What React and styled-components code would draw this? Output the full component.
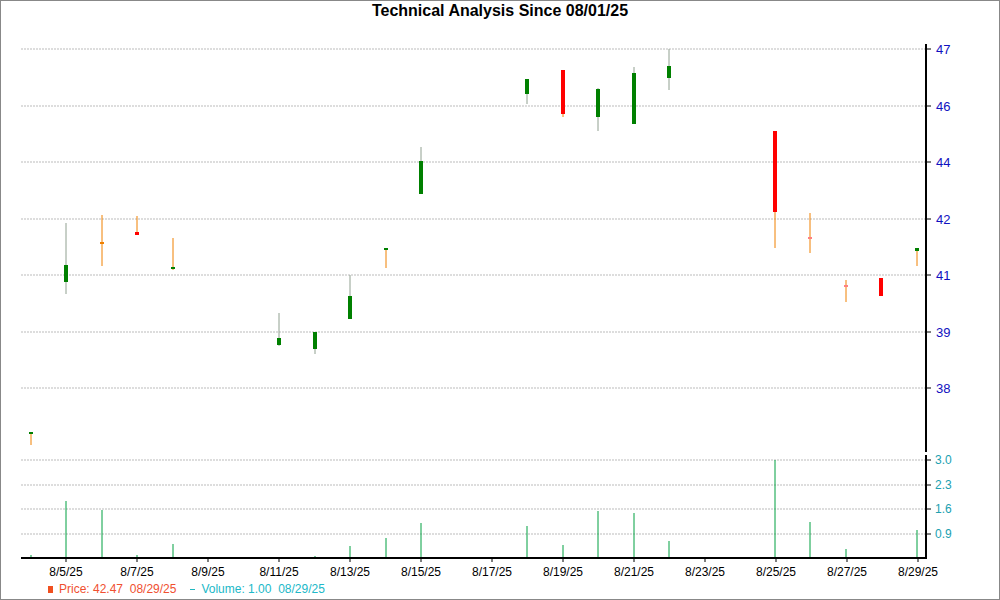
import React from 'react';
import styled, { createGlobalStyle } from 'styled-components';

const Global = createGlobalStyle`
  body { margin: 0; font-family: "Liberation Sans", Arial, sans-serif; background: #fff; }
`;

const Frame = styled.div`
  width: 1000px;
  height: 600px;
  box-sizing: border-box;
  border: 1px solid #888;
  display: flex;
  flex-direction: column;
`;

const Title = styled.div`
  height: 21px;
  line-height: 20px;
  text-align: center;
  font-weight: bold;
  font-size: 16px;
  color: #000;
`;

const Legend = styled.div`
  display: flex;
  align-items: center;
  gap: 14px;
  padding-left: 47px;
  font-size: 12px;
  height: 20px;
`;

const Item = styled.span`
  color: ${p => p.color};
  display: flex;
  align-items: center;
  gap: 6px;
  white-space: pre;
`;

const Swatch = styled.span`
  width: 5px;
  height: 7px;
  background: #f05020;
`;

const Dash = styled.span`
  width: 5px;
  height: 1px;
  background: #20b8c0;
`;

const GREEN = '#008000';
const RED = '#ff0000';
const WICK = '#f08000';

const candles = [
  [30, 432, 445, 432, 434, GREEN],
  [65, 223, 294, 265, 282, GREEN],
  [101, 215, 266, 242, 244, WICK],
  [136, 216, 235, 232, 235, RED],
  [172, 238, 270, 267, 269, GREEN],
  [278, 313, 346, 338, 345, GREEN],
  [314, 332, 354, 332, 349, GREEN],
  [349, 275, 319, 296, 319, GREEN],
  [385, 248, 268, 248, 250, GREEN],
  [420, 147, 194, 161, 194, GREEN],
  [526, 79, 104, 79, 94, GREEN],
  [562, 70, 117, 70, 114, RED],
  [597, 88, 131, 89, 117, GREEN],
  [633, 67, 124, 73, 124, GREEN],
  [668, 49, 90, 66, 78, GREEN],
  [774, 131, 248, 131, 212, RED],
  [809, 213, 253, 237, 238, '#ff8080'],
  [845, 280, 302, 285, 287, '#ff8080'],
  [880, 278, 296, 278, 296, RED],
  [916, 249, 266, 248, 251, GREEN],
];

const volumes = [
  [30, 555], [65, 501], [101, 510], [136, 555], [172, 544], [314, 556], [349, 546],
  [385, 538], [420, 523], [526, 526], [562, 545], [597, 511], [633, 513], [668, 541],
  [774, 460], [809, 522], [845, 549], [916, 530],
];

const priceGrid = [[49, '47'], [106, '46'], [162, '44'], [219, '42'], [275, '41'], [332, '39'], [388, '38']];
const volGrid = [[460, '3.0'], [485, '2.3'], [509, '1.6'], [534, '0.9']];
const dates = ['8/5/25', '8/7/25', '8/9/25', '8/11/25', '8/13/25', '8/15/25', '8/17/25', '8/19/25', '8/21/25', '8/23/25', '8/25/25', '8/27/25', '8/29/25'];

const Chart = () => (
  <svg width="998" height="557" viewBox="0 22 998 557" style={{ display: 'block' }}>
    {priceGrid.map(([y, l]) => (
      <g key={y}>
        <line x1="20" x2="925" y1={y} y2={y} stroke="#bbb" strokeDasharray="2 1" />
        <line x1="925" x2="930" y1={y} y2={y} stroke="#000" />
        <text x="935" y={y + 5} fontSize="13" fill="#1010c0" fontFamily="Liberation Sans, sans-serif">{l}</text>
      </g>
    ))}
    {volGrid.map(([y, l]) => (
      <g key={y}>
        <line x1="20" x2="925" y1={y} y2={y} stroke="#bbb" strokeDasharray="2 1" />
        <line x1="925" x2="930" y1={y} y2={y} stroke="#000" />
        <text x="934" y={y + 4} fontSize="12" fill="#20a0b0" fontFamily="Liberation Sans, sans-serif">{l}</text>
      </g>
    ))}
    <line x1="925" x2="925" y1="44" y2="452" stroke="#000" strokeWidth="2" />
    <line x1="925" x2="925" y1="455" y2="558" stroke="#000" strokeWidth="2" />
    <line x1="20" x2="926" y1="558" y2="558" stroke="#000" strokeWidth="2" />
    {dates.map((d, i) => {
      const x = 65 + i * 71;
      return (
        <g key={d}>
          <line x1={x} x2={x} y1="558" y2="562" stroke="#000" />
          <text x={x} y="576" fontSize="12" textAnchor="middle" fill="#000" fontFamily="Liberation Sans, sans-serif">{d}</text>
        </g>
      );
    })}
    {volumes.map(([x, y]) => (
      <line key={x} x1={x} x2={x} y1={y} y2="557" stroke="#00a040" />
    ))}
    {candles.map(([x, wt, wb, bt, bb, c]) => (
      <g key={x}>
        <line x1={x} x2={x} y1={wt} y2={wb} stroke={c === GREEN && bb - bt > 3 ? '#90a090' : WICK} />
        <rect x={x - 2} y={bt} width="4" height={Math.max(bb - bt, 2)} fill={c} />
      </g>
    ))}
  </svg>
);

export default function App() {
  return (
    <Frame>
      <Global />
      <Title>Technical Analysis Since 08/01/25</Title>
      <Chart />
      <Legend>
        <Item color="#f05030"><Swatch />{'Price: 42.47  08/29/25'}</Item>
        <Item color="#20b8c8"><Dash />{'Volume: 1.00  08/29/25'}</Item>
      </Legend>
    </Frame>
  );
}
